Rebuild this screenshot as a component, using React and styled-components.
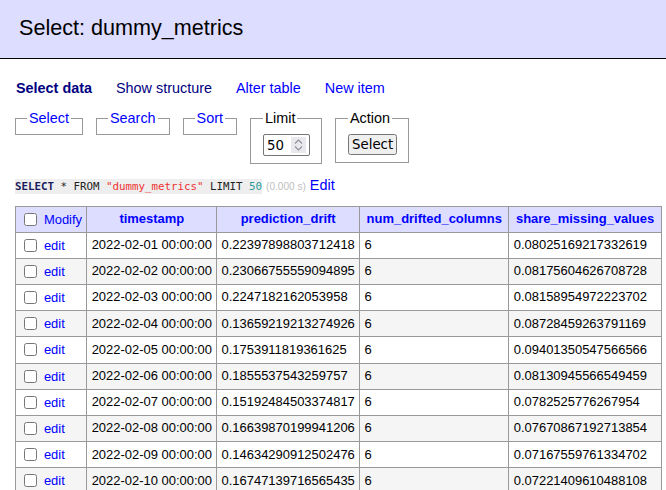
import React from "react";
import styled, { createGlobalStyle } from "styled-components";

const Global = createGlobalStyle`
  html, body { margin: 0; padding: 0; background: #fff; }
  body {
    color: #000;
    font: 14.4px/18px "Liberation Sans", Arial, sans-serif;
  }
`;

const Title = styled.h2`
  margin: 0;
  padding: 14px 20px 17px 19px;
  height: 27px;
  font-size: 21.6px;
  line-height: 27px;
  font-weight: normal;
  background: #ddf;
  border-bottom: 1px solid #000;
  color: #000;
`;

const Content = styled.div`
  padding: 0 0 20px 15px;
`;

const Links = styled.p`
  margin: 20px 0 0 1px;
  display: flex;
  gap: 24px;
  white-space: nowrap;
`;

const Link = styled.a`
  color: ${(p) => (p.$visited ? "navy" : "blue")};
  font-weight: ${(p) => (p.$active ? "bold" : "normal")};
  text-decoration: none;
  cursor: pointer;
`;

const Form = styled.form`
  display: flex;
  align-items: flex-start;
  gap: 13px;
  margin-top: 12px;
`;

const Fieldset = styled.fieldset`
  margin: 0;
  padding: ${(p) => (p.$wide ? "0 11px 7px 12px" : "0 11px 7px 11px")};
  border: 1px solid #999;
  min-width: 0;
  min-height: 5px;
`;

const Legend = styled.legend`
  padding: 0 2px;
  line-height: 18px;
`;

const FieldBody = styled.div`
  padding-top: 7px;
  display: flex;
  align-items: center;
`;

const NumberBox = styled.div`
  width: 47px;
  height: 22px;
  box-sizing: border-box;
  border: 1px solid #767676;
  border-radius: 2px;
  background: #fff;
  display: flex;
  align-items: center;
  padding: 0 3px 0 3px;
`;

const NumberText = styled.input`
  flex: 1;
  min-width: 0;
  width: 20px;
  border: 0;
  outline: 0;
  padding: 0;
  margin: 0;
  background: transparent;
  font: 13.33px "DejaVu Sans", sans-serif;
  color: #000;
`;

const Spinner = styled.span`
  width: 15px;
  height: 16px;
  background: #e9e9ed;
  display: flex;
  flex-direction: column;
  align-items: center;
  justify-content: center;
  gap: 2px;
`;

const Button = styled.button`
  margin: 0;
  width: 49px;
  height: 21px;
  font: 13.33px "DejaVu Sans", sans-serif;
  padding: 1px 2px;
`;

const SqlLine = styled.p`
  margin: 12px 0 0 0;
  line-height: 18px;
  white-space: nowrap;
`;

const Code = styled.code`
  font-family: "DejaVu Sans Mono", monospace;
  font-size: 10.8px;
  background: #eee;
  padding: 0.6px 0;
  color: #222;
`;

const Kw = styled.span`
  color: ${(p) => p.$color || "#222"};
  font-weight: ${(p) => (p.$bold ? "bold" : "normal")};
`;

const Time = styled.span`
  color: silver;
  font-size: 10.08px;
  margin: 0 4px 0 4px;
`;

const Table = styled.table`
  margin-top: 10px;
  border-collapse: collapse;
  font-size: 12.96px;
  line-height: 16.2px;
  white-space: nowrap;
`;

const Th = styled.th`
  border: 1px solid #999;
  background: #ddf;
  padding: 2.6px 6.5px;
  height: 19.4px;
  text-align: center;
  a { color: blue; text-decoration: none; font-weight: bold; }
`;

const HeadTd = styled.td`
  border: 1px solid #999;
  background: #ddf;
  padding: 2.6px 4.3px;
  height: 19.4px;
  a { color: blue; text-decoration: none; }
`;

const Td = styled.td`
  border: 1px solid #999;
  padding: 2.6px 4.3px;
  height: 20px;
  background: ${(p) => (p.$odd ? "#f5f5f5" : "#fff")};
  a { color: blue; text-decoration: none; }
`;

const Check = styled.input`
  margin: 3px 3px 3px 4px;
  vertical-align: -2px;
`;

const rows = [
  ["2022-02-01 00:00:00", "0.22397898803712418", "6", "0.08025169217332619"],
  ["2022-02-02 00:00:00", "0.23066755559094895", "6", "0.08175604626708728"],
  ["2022-02-03 00:00:00", "0.2247182162053958", "6", "0.08158954972223702"],
  ["2022-02-04 00:00:00", "0.13659219213274926", "6", "0.08728459263791169"],
  ["2022-02-05 00:00:00", "0.1753911819361625", "6", "0.09401350547566566"],
  ["2022-02-06 00:00:00", "0.1855537543259757", "6", "0.08130945566549459"],
  ["2022-02-07 00:00:00", "0.15192484503374817", "6", "0.0782525776267954"],
  ["2022-02-08 00:00:00", "0.16639870199941206", "6", "0.07670867192713854"],
  ["2022-02-09 00:00:00", "0.14634290912502476", "6", "0.07167559761334702"],
  ["2022-02-10 00:00:00", "0.16747139716565435", "6", "0.07221409610488108"],
];

const cols = ["timestamp", "prediction_drift", "num_drifted_columns", "share_missing_values"];

function Chevron({ up }) {
  return (
    <svg width="9" height="5" viewBox="0 0 9 5">
      <path
        d={up ? "M1 4.5 L4.5 1 L8 4.5" : "M1 0.5 L4.5 4 L8 0.5"}
        fill="none"
        stroke="#8f8f9d"
        strokeWidth="1.1"
      />
    </svg>
  );
}

export default function App() {
  return (
    <>
      <Global />
      <Title>Select: dummy_metrics</Title>
      <Content>
        <Links>
          <Link $visited $active>Select data</Link>
          <Link $visited>Show structure</Link>
          <Link>Alter table</Link>
          <Link>New item</Link>
        </Links>
        <Form onSubmit={(e) => e.preventDefault()}>
          <Fieldset><Legend><Link>Select</Link></Legend></Fieldset>
          <Fieldset><Legend><Link>Search</Link></Legend></Fieldset>
          <Fieldset><Legend><Link>Sort</Link></Legend></Fieldset>
          <Fieldset $wide>
            <Legend>Limit</Legend>
            <FieldBody>
              <NumberBox>
                <NumberText type="text" defaultValue="50" />
                <Spinner>
                  <Chevron up />
                  <Chevron />
                </Spinner>
              </NumberBox>
            </FieldBody>
          </Fieldset>
          <Fieldset $wide>
            <Legend>Action</Legend>
            <FieldBody><Button type="button">Select</Button></FieldBody>
          </Fieldset>
        </Form>
        <SqlLine>
          <Code>
            <Kw $bold $color="#1a1a5e">SELECT</Kw> * FROM <Kw $color="#e33">"dummy_metrics"</Kw> LIMIT <Kw $color="#2a9a9a">50</Kw>
          </Code>
          <Time>(0.000 s)</Time>
          <Link>Edit</Link>
        </SqlLine>
        <Table>
          <thead>
            <tr>
              <HeadTd><Check type="checkbox" /> <a>Modify</a></HeadTd>
              {cols.map((c) => (
                <Th key={c}><a>{c}</a></Th>
              ))}
            </tr>
          </thead>
          <tbody>
            {rows.map((r, i) => (
              <tr key={i}>
                <Td $odd={i % 2 === 1}><Check type="checkbox" /> <a>edit</a></Td>
                {r.map((v, j) => (
                  <Td key={j} $odd={i % 2 === 1}>{v}</Td>
                ))}
              </tr>
            ))}
          </tbody>
        </Table>
      </Content>
    </>
  );
}
